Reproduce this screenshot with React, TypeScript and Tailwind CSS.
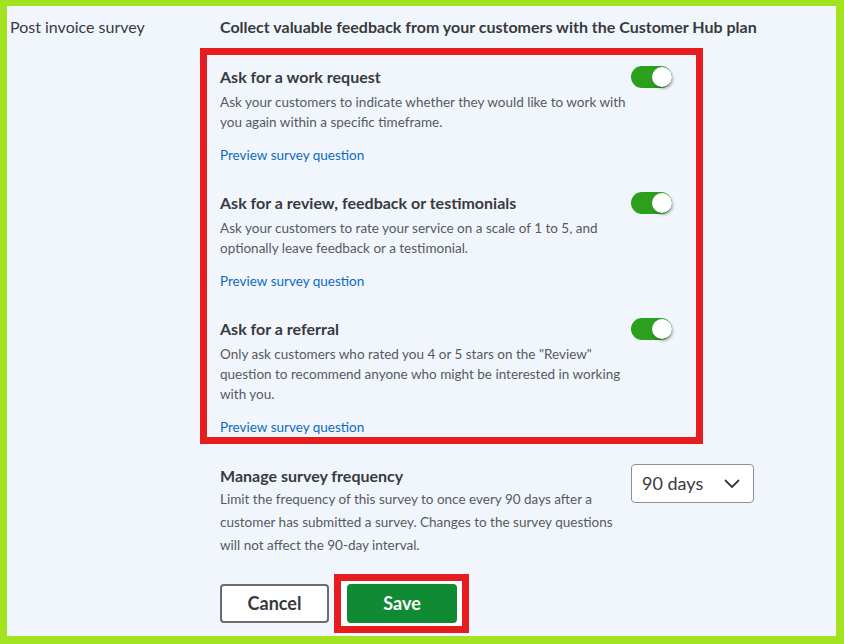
import React, { useState } from 'react';

const font = { fontFamily: 'Lato, "Open Sans", sans-serif' };

type Question = { id: string; title: string; desc: string };

const questions: Question[] = [
  {
    id: 'work',
    title: 'Ask for a work request',
    desc: 'Ask your customers to indicate whether they would like to work with you again within a specific timeframe.',
  },
  {
    id: 'review',
    title: 'Ask for a review, feedback or testimonials',
    desc: 'Ask your customers to rate your service on a scale of 1 to 5, and optionally leave feedback or a testimonial.',
  },
  {
    id: 'referral',
    title: 'Ask for a referral',
    desc: 'Only ask customers who rated you 4 or 5 stars on the "Review" question to recommend anyone who might be interested in working with you.',
  },
];

const Toggle: React.FC<{ on: boolean; onChange: () => void }> = ({ on, onChange }) => (
  <button
    onClick={onChange}
    className={`relative w-[41px] h-[22px] rounded-full shrink-0 ${on ? 'bg-[#2ca01c]' : 'bg-[#8d9096]'}`}
  >
    <span
      className={`absolute top-[1px] w-[20px] h-[20px] rounded-full bg-white shadow-[1px_2px_3px_rgba(0,0,0,0.3)] ${
        on ? 'right-[0px]' : 'left-[1px]'
      }`}
    />
  </button>
);

export default function App() {
  const [enabled, setEnabled] = useState<Record<string, boolean>>({ work: true, review: true, referral: true });

  return (
    <div
      style={font}
      className="h-[644px] w-[844px] box-border bg-[#f1f6fd] border-[#a2e21e] border-t-[6px] border-l-[7px] border-r-[8px] border-b-[8px] flex text-[#393a3d]"
    >
      {/* Label column */}
      <div className="w-[193px] shrink-0 pl-[3px] pt-[11px] text-[16px] leading-[20px]">Post invoice survey</div>

      {/* Settings column */}
      <div className="flex flex-col">
        <h2 className="pl-[20px] pt-[11px] text-[16px] leading-[20px] font-bold">
          Collect valuable feedback from your customers with the Customer Hub plan
        </h2>

        {/* Survey questions */}
        <div className="mt-[11px] w-[503px] border-[7px] border-[#e61c1f] pl-[13px] pr-[24px] pt-[12px] flex flex-col gap-[28px]">
          {questions.map((q, idx) => (
            <div key={q.id} className="flex flex-col">
              <div className="flex items-center justify-between h-[20px]">
                <h3 className="text-[16px] leading-[20px] font-bold">{q.title}</h3>
                <Toggle
                  on={enabled[q.id]}
                  onChange={() => setEnabled({ ...enabled, [q.id]: !enabled[q.id] })}
                />
              </div>
              <p className="mt-[5px] max-w-[414px] text-[13.5px] leading-[20px] text-[#58595c]">{q.desc}</p>
              <a
                href="#"
                className={`mt-[13px] text-[13.5px] text-[#0b6bbf] ${idx === questions.length - 1 ? 'leading-[20px]' : 'leading-[20px]'}`}
              >
                Preview survey question
              </a>
            </div>
          ))}
        </div>

        {/* Frequency */}
        <div className="mt-[22px] pl-[20px] flex">
          <div className="w-[411px] pr-[4px]">
            <h3 className="text-[16px] leading-[20px] font-bold">Manage survey frequency</h3>
            <p className="mt-[2px] text-[13.5px] leading-[23px] text-[#58595c]">
              Limit the frequency of this survey to once every 90 days after a customer has submitted a survey. Changes to
              the survey questions will not affect the 90-day interval.
            </p>
          </div>
          <button className="h-[39px] w-[123px] -mt-[2px] rounded-[4px] border border-[#8d9096] bg-white flex items-center justify-between pl-[10px] pr-[13px] text-[18px]">
            <span>90 days</span>
            <svg width="16" height="10" viewBox="0 0 16 10" fill="none">
              <path d="M1.5 1.5 L8 8 L14.5 1.5" stroke="#393a3d" strokeWidth="1.8" strokeLinecap="round" strokeLinejoin="round" />
            </svg>
          </button>
        </div>

        {/* Actions */}
        <div className="mt-[17px] pl-[20px] flex items-center gap-[5px]">
          <button className="w-[109px] h-[39px] rounded-[4px] border-2 border-[#6b6c72] bg-white text-[18px] font-bold text-[#393a3d]">
            Cancel
          </button>
          <div className="border-[7px] border-[#e61c1f] bg-white pt-[3px] pb-[3px] pl-[6px] pr-[5px]">
            <button className="w-[110px] h-[39px] rounded-[4px] bg-[#108a33] text-[18px] font-bold text-white">Save</button>
          </div>
        </div>
      </div>
    </div>
  );
}
